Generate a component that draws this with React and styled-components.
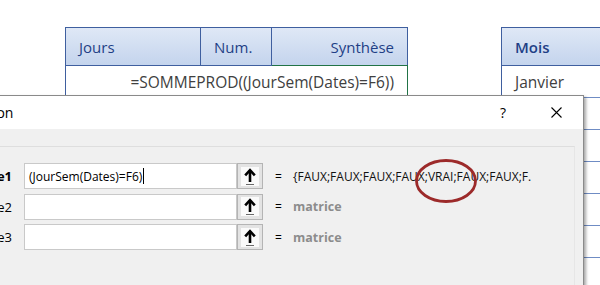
import React from "react";
import styled, { createGlobalStyle } from "styled-components";

const Global = createGlobalStyle`
  html, body { margin: 0; padding: 0; background: #ffffff; }
  body { width: 600px; height: 285px; overflow: hidden; }
`;

const Page = styled.div`
  position: relative;
  width: 600px;
  height: 285px;
  overflow: hidden;
  background: #fff;
  font-family: "Open Sans", "Noto Sans", sans-serif;
`;

const Sheet = styled.div`
  display: flex;
  align-items: flex-start;
  padding: 27px 0 0 65px;
  gap: 93px;
`;

const Table = styled.div`
  display: grid;
  grid-template-columns: ${(p) => p.$cols};
  border-left: 1px solid #3f5f9f;
  border-top: 1px solid #3f5f9f;
  border-right: ${(p) => (p.$open ? "none" : "1px solid #3f5f9f")};
  flex: none;
`;

const HeadCell = styled.div`
  height: 37px;
  display: flex;
  align-items: center;
  justify-content: ${(p) => (p.$right ? "flex-end" : "flex-start")};
  padding: 0 13px;
  background: linear-gradient(#dfe8f6, #c4d4ed);
  border-bottom: 1px solid #3f5f9f;
  border-right: ${(p) => (p.$last ? "none" : "1px solid #3f5f9f")};
  color: #1f3f86;
  font-size: 15px;
  font-weight: ${(p) => (p.$bold ? 600 : 400)};
  white-space: nowrap;
`;

const BodyCell = styled.div`
  height: 31px;
  display: flex;
  align-items: center;
  justify-content: ${(p) => (p.$right ? "flex-end" : "flex-start")};
  padding: 0 13px;
  border-bottom: 1px solid #6f8cc4;
  color: #404040;
  font-size: 15.5px;
  white-space: nowrap;
  position: relative;
  z-index: ${(p) => (p.$selected ? 2 : 1)};
  ${(p) =>
    p.$selected &&
    `
    border-top: 1px solid #217346;
    border-right: 1px solid #217346;
    margin-top: -1px;
    margin-right: -1px;
  `}
`;

const Dialog = styled.div`
  position: absolute;
  top: 95px;
  left: -162px;
  width: 744px;
  height: 230px;
  background: #f0f0f0;
  border: 1px solid #8a8a8a;
  box-shadow: 2px 2px 3px rgba(0, 0, 0, 0.35);
  font-family: "Open Sans", "Noto Sans", sans-serif;
  color: #000;
  z-index: 5;
`;

const TitleBar = styled.div`
  height: 33px;
  background: #fff;
  display: flex;
  align-items: center;
  padding-left: 10px;
`;

const Title = styled.div`
  font-size: 14px;
  flex: 1;
  white-space: nowrap;
`;

const TitleButton = styled.div`
  width: ${(p) => p.$w}px;
  height: 33px;
  display: flex;
  align-items: center;
  justify-content: center;
  font-size: 14px;
`;

const Body = styled.div`
  padding: 17px 8px 0 10px;
`;

const Panel = styled.div`
  border: 1px solid #dedede;
  border-right-color: #e6e6e6;
  padding: 16px 0 60px 0;
  display: grid;
  grid-template-columns: 162px 239px 1fr;
  column-gap: 12px;
  row-gap: 4.5px;
  align-items: center;
`;

const Label = styled.div`
  text-align: right;
  font-size: 13px;
  font-weight: ${(p) => (p.$active ? 700 : 400)};
  white-space: nowrap;
`;

const Field = styled.div`
  display: flex;
  height: 26px;
`;

const Input = styled.div`
  flex: 1;
  background: #fff;
  border: 1px solid #c9c9c9;
  display: flex;
  align-items: center;
  padding-left: 4px;
  font-size: 12px;
  white-space: nowrap;
`;

const Caret = styled.span`
  display: inline-block;
  width: 1px;
  height: 16px;
  background: #000;
  margin-left: 1px;
`;

const RefButton = styled.div`
  width: 24px;
  height: 24px;
  border: 1px solid #b4b4b4;
  background: #e3e3e3;
  display: flex;
  align-items: center;
  justify-content: center;
`;

const RefInner = styled.div`
  width: 18px;
  height: 19px;
  background: #fafafa;
  display: flex;
  align-items: center;
  justify-content: center;
`;

const Result = styled.div`
  display: flex;
  align-items: center;
  gap: 12px;
  font-size: 12px;
  white-space: nowrap;
  position: relative;
`;

const Eq = styled.span`
  width: 6px;
  text-align: center;
`;

const Value = styled.span`
  color: ${(p) => (p.$muted ? "#8c8c8c" : "#111")};
  font-weight: ${(p) => (p.$muted ? 700 : 400)};
  font-size: ${(p) => (p.$muted ? "12.5px" : "12px")};
`;

const Annotation = styled.svg`
  position: absolute;
  left: 139px;
  top: -10px;
  pointer-events: none;
`;

const ArrowIcon = () => (
  <svg width="14" height="19" viewBox="0 0 14 19">
    <path d="M7 3.5 L7 15" stroke="#000" strokeWidth="2.6" />
    <path d="M2.2 8.3 L7 3.2 L11.8 8.3" stroke="#000" strokeWidth="2.6" fill="none" />
    <path d="M3 17.5 L11 17.5" stroke="#6a6a6a" strokeWidth="1" />
  </svg>
);

const CloseIcon = () => (
  <svg width="11" height="11" viewBox="0 0 11 11">
    <path d="M0.5 0.5 L10.5 10.5 M10.5 0.5 L0.5 10.5" stroke="#000" strokeWidth="1.1" />
  </svg>
);

const days = ["Lundi", "Mardi", "Mercredi", "Jeudi", "Vendredi", "Samedi"];
const months = ["Janvier", "Février", "Mars", "Avril", "Mai", "Juin", "Juillet"];

const args = [
  { label: "Matrice1", value: "(JourSem(Dates)=F6)", result: "{FAUX;FAUX;FAUX;FAUX;VRAI;FAUX;FAUX;F.", active: true },
  { label: "Matrice2", value: "", result: "matrice" },
  { label: "Matrice3", value: "", result: "matrice" },
];

export default function App() {
  return (
    <Page>
      <Global />
      <Sheet>
        <Table $cols="135px 71px 135px">
          <HeadCell>Jours</HeadCell>
          <HeadCell>Num.</HeadCell>
          <HeadCell $right $last>Synthèse</HeadCell>
          <BodyCell />
          <BodyCell />
          <BodyCell $right $selected>=SOMMEPROD((JourSem(Dates)=F6))</BodyCell>
          {days.map((d) => (
            <React.Fragment key={d}>
              <BodyCell>{d}</BodyCell>
              <BodyCell />
              <BodyCell />
            </React.Fragment>
          ))}
        </Table>
        <Table $cols="200px" $open>
          <HeadCell $bold $last>Mois</HeadCell>
          {months.map((m) => (
            <BodyCell key={m}>{m}</BodyCell>
          ))}
        </Table>
      </Sheet>

      <Dialog>
        <TitleBar>
          <Title>Arguments de la fonction</Title>
          <TitleButton $w={54}>?</TitleButton>
          <TitleButton $w={53}>
            <CloseIcon />
          </TitleButton>
        </TitleBar>
        <Body>
          <Panel>
            {args.map((a) => (
              <React.Fragment key={a.label}>
                <Label $active={a.active}>{a.label}</Label>
                <Field>
                  <Input>
                    {a.value}
                    {a.active && <Caret />}
                  </Input>
                  <RefButton>
                    <RefInner>
                      <ArrowIcon />
                    </RefInner>
                  </RefButton>
                </Field>
                <Result>
                  <Eq>=</Eq>
                  <Value $muted={!a.active}>{a.result}</Value>
                  {a.active && (
                    <Annotation width="64" height="46" viewBox="0 0 64 46">
                      <ellipse cx="32" cy="23" rx="29.5" ry="20.5" fill="none" stroke="#9c2a2a" strokeWidth="2.8" />
                    </Annotation>
                  )}
                </Result>
              </React.Fragment>
            ))}
          </Panel>
        </Body>
      </Dialog>
    </Page>
  );
}
